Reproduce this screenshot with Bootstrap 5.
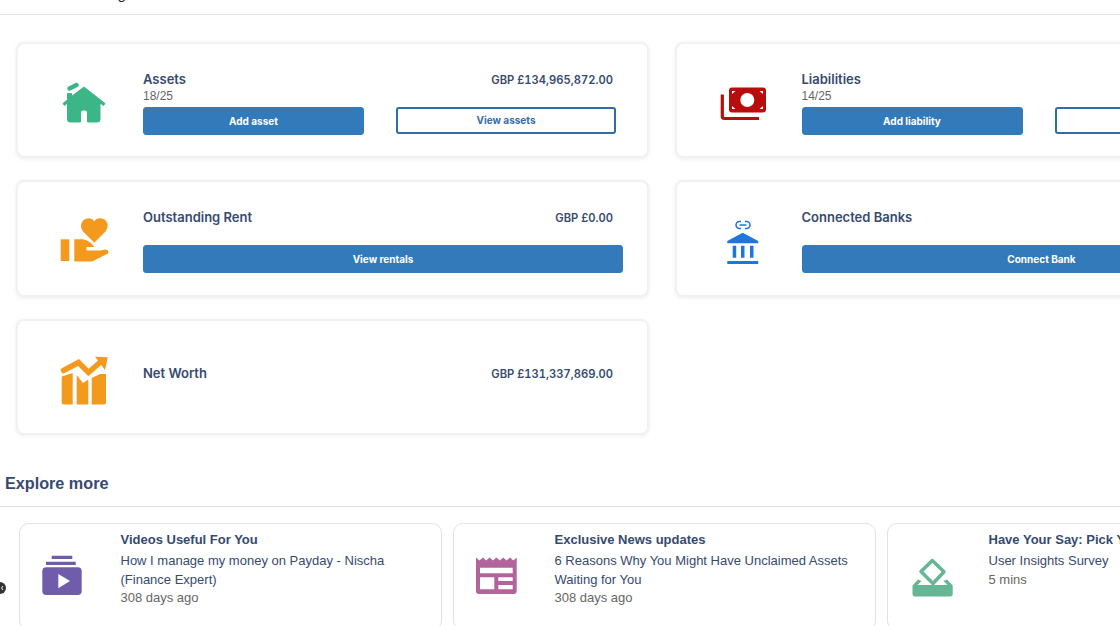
<!DOCTYPE html>
<html lang="en">
<head>
<meta charset="utf-8">
<title>Dashboard</title>
<link rel="stylesheet" href="https://cdn.jsdelivr.net/npm/bootstrap@5.3.0/dist/css/bootstrap.min.css">
<style>
html,body{height:626px;overflow:hidden;background:#fff}
body{font-family:"Liberation Sans",Arial,sans-serif;width:1120px;position:relative}
.top-strip{height:15px;overflow:hidden;border-bottom:1px solid #e3e3e3}
.top-strip span{display:block;margin-top:-15.500px;font-size:15px;line-height:18px;padding-left:5px;color:#222}
.tile-grid{display:grid;grid-template-columns:633px 633px;column-gap:25.500px;row-gap:22px;width:1291px;padding:26.500px 0 0 16px}
.tile{height:116.500px;border:2px solid #f1f1f1;border-radius:8px;box-shadow:0 1px 4px rgba(0,0,0,.07);background:#fff;flex-direction:row;align-items:center}
.tile-ico{width:60px;height:60px;margin-left:36px;flex:none}
.tile-body{margin-left:29px;width:480px;align-self:flex-start;padding-top:26px;font-family:Inter,"Liberation Sans",sans-serif}
.tile-body-mid{padding-top:43px}
.tile-name{font-size:13px;font-weight:600;line-height:18px;color:#364a6f}
.tile-val{font-size:11.200px;font-weight:600;line-height:18px;height:18px;color:#364a6f;padding:1px 10px 0 0;font-variant-numeric:tabular-nums}
.tile-count{font-size:12px;line-height:15px;height:15px;color:#666;font-family:"Liberation Sans",sans-serif;margin:1px 0 3px}
.tile-acts{gap:32px}
.act{font-size:10px;font-weight:700;border-radius:3px;height:28px;line-height:26px;padding:0;width:221px;--bs-btn-bg:#337abb;--bs-btn-border-color:#337abb;--bs-btn-color:#fff}
.act-line{width:220px;height:27px;line-height:23px;border:2px solid #2e6ea8;background:#fff;color:#336fa8;--bs-btn-bg:#fff;--bs-btn-color:#336fa8;--bs-btn-border-color:#2e6ea8}
.act-wide{width:480px}
.act-gap{margin-top:19px}
.explore-h{font-size:16.200px;font-weight:700;line-height:20px;color:#364a6f;margin:0;padding:38px 0 13px 5px;border-bottom:1px solid #e3e3e3}
.explore-row{gap:11.500px;padding:16px 0 0 19px;width:1400px}
.promo{width:422.500px;height:108px;border:1.500px solid #e2e2e2;border-radius:10px;flex-direction:row;align-items:center;background:#fff;flex:none}
.promo-ico{width:60px;height:60px;margin-left:11.500px;flex:none}
.promo-body{margin-left:29px;align-self:flex-start;padding-top:6.500px;font-size:13px;color:#364a6f;line-height:18.500px}
.promo-title{font-weight:700;margin-bottom:3px}
.promo-meta{color:#666}
.pager-dot{position:absolute;left:-6px;top:582px;width:12px;height:12px;border-radius:50%;background:#333;display:flex;align-items:center;justify-content:flex-end;padding-right:2px}
.pager-dot svg{display:block}
</style>
</head>
<body>
<div class="top-strip"><span>Dashboard Listing</span></div>

<div class="tile-grid">
  <div class="card tile">
    <svg class="tile-ico" viewBox="54 70 60 60"><path d="M84 87 105 103.500 103.500 105.500 100 103V119.500Q100 122 97.500 122H87.500V113Q87.500 110 85 110H83Q80.500 110 80.500 113V122H70Q67.500 122 67.500 119.500V103L64.500 105.500 63 103.500 67.500 100V93.500H71.500V96.500Z" fill="#3cb687" stroke="#3cb687" stroke-width="1" stroke-linejoin="round"/><path d="M69.500 88.500 76.500 85" stroke="#3cb687" stroke-width="4.500" stroke-linecap="round" fill="none"/></svg>
    <div class="tile-body">
      <div class="d-flex justify-content-between"><span class="tile-name">Assets</span><span class="tile-val">GBP £134,965,872.00</span></div>
      <div class="tile-count">18/25</div>
      <div class="d-flex tile-acts"><a class="btn act" href="#">Add asset</a><a class="btn act act-line" href="#">View assets</a></div>
    </div>
  </div>
  <div class="card tile">
    <svg class="tile-ico" viewBox="713 70 60 60"><rect x="729" y="87.500" width="37" height="25" rx="3" fill="#b80d0d"/><circle cx="747.300" cy="100" r="7" fill="#fff"/><path d="M732 91h3.500l-3.500 3zM763 91h-3.500l3.500 3zM732 109h3.500l-3.500-3zM763 109h-3.500l3.500-3z" fill="#fff"/><path d="M722.300 94.500V116.500Q722.300 118.500 724.500 118.500H759" stroke="#b80d0d" stroke-width="3.200" fill="none"/></svg>
    <div class="tile-body">
      <div class="d-flex justify-content-between"><span class="tile-name">Liabilities</span><span class="tile-val">GBP £3,628,003.00</span></div>
      <div class="tile-count">14/25</div>
      <div class="d-flex tile-acts"><a class="btn act" href="#">Add liability</a><a class="btn act act-line" href="#">View liabilities</a></div>
    </div>
  </div>
  <div class="card tile">
    <svg class="tile-ico" viewBox="54 208 60 60"><path d="M94.300 242.700 83 231.500Q80.500 228.500 81 225 82 219 88 218.300 92 218 94.300 221.500 96.500 218 100.500 218.300 107 219 107.700 225 108 228.500 105.500 231.500Z" fill="#f39a1e"/><rect x="60.700" y="239.300" width="8.600" height="21.700" fill="#f39a1e"/><path d="M74.300 239.300H82C87 239.500 91.500 243 94.500 247H86.500V250.500H100L105.500 249.500Q109.500 250 108 253.500L92 261.500H74.300Z" fill="#f39a1e"/></svg>
    <div class="tile-body">
      <div class="d-flex justify-content-between"><span class="tile-name">Outstanding Rent</span><span class="tile-val">GBP £0.00</span></div>
      <a class="btn act act-wide act-gap" href="#">View rentals</a>
    </div>
  </div>
  <div class="card tile">
    <svg class="tile-ico" viewBox="713 208 60 60"><path d="M741 221.500h-1.500a3.500 3.500 0 0 0 0 7H741M745 221.500h1.500a3.500 3.500 0 0 1 0 7H745M739.500 225h7" fill="none" stroke="#1f75e0" stroke-width="1.500"/><path d="M742.700 232.700 727.300 241V243.300H758.200V241Z" fill="#1f75e0"/><path d="M732.700 245.700h3.500v12h-3.500zM741 245.700h3.500v12H741zM750 245.700h3.500v12H750zM727.300 261h30.900v3H727.300z" fill="#1f75e0"/></svg>
    <div class="tile-body">
      <div class="d-flex justify-content-between"><span class="tile-name">Connected Banks</span></div>
      <a class="btn act act-wide act-gap" href="#">Connect Bank</a>
    </div>
  </div>
  <div class="card tile">
    <svg class="tile-ico" viewBox="54 347 60 60"><path d="M63.500 370.500 78.500 362.500 88.500 372.500 101 361.500" stroke="#f39a1e" stroke-width="5.500" stroke-linecap="round" fill="none"/><path d="M95 356.700 107.800 357.300 105 370Z" fill="#f39a1e"/><path d="M61.700 376.500 72.700 373V404.500H63.500Q61.700 404.500 61.700 402.500ZM76.700 375 83 383 88.300 379.500V404.500H76.700ZM91.700 378 100 374H106V402.500Q106 404.500 104 404.500H91.700Z" fill="#f39a1e"/></svg>
    <div class="tile-body tile-body-mid">
      <div class="d-flex justify-content-between"><span class="tile-name">Net Worth</span><span class="tile-val">GBP £131,337,869.00</span></div>
    </div>
  </div>
</div>

<h2 class="explore-h">Explore more</h2>
<span class="pager-dot" aria-hidden="true"><svg width="4" height="8" viewBox="0 0 4 8"><path d="M3 2 1.500 4 3 6" fill="none" stroke="#fff" stroke-width="1"/></svg></span>
<div class="d-flex explore-row">
  <div class="card promo">
    <svg class="promo-ico" viewBox="32 547 60 60"><path d="M51.700 555.700h20.600v3.400H51.700zM46 561.700h29.700v3.400H46z" fill="#6f5cab"/><rect x="42.300" y="567.300" width="39.400" height="27.700" rx="4" fill="#6f5cab"/><path d="M58.300 574v14.300L70 581Z" fill="#fff"/></svg>
    <div class="promo-body">
      <div class="promo-title">Videos Useful For You</div>
      <div>How I manage my money on Payday - Nischa<br>(Finance Expert)</div>
      <div class="promo-meta">308 days ago</div>
    </div>
  </div>
  <div class="card promo">
    <svg class="promo-ico" viewBox="466 547 60 60"><path d="M476 557.500l3.400 3 3.400-3 3.400 3 3.400-3 3.400 3 3.400-3 3.400 3 3.400-3 3.400 3 3.400-3 3.400 3 3.300-3V591Q516.700 594 513.700 594H479Q476 594 476 591Z" fill="#b0649b"/><path d="M480 567.700h32.700v5.600H480zM480 577.300h14.300v12H480zM498.300 577.300h14.400v3.700h-14.400zM498.300 585h14.400v4.300h-14.400z" fill="#fff"/></svg>
    <div class="promo-body">
      <div class="promo-title">Exclusive News updates</div>
      <div>6 Reasons Why You Might Have Unclaimed Assets<br>Waiting for You</div>
      <div class="promo-meta">308 days ago</div>
    </div>
  </div>
  <div class="card promo">
    <svg class="promo-ico" viewBox="900 547 60 60"><path d="M932.300 560.500 944 571.700 933 583.500 921 571.500Z" fill="none" stroke="#66b594" stroke-width="3.500" stroke-linejoin="round"/><path d="M918 579.500 912.500 585.500V594Q912.500 596.500 915 596.500H950Q952.700 596.500 952.700 594V585.500L947 579.500 943.500 581 947.500 585H917.500L921.500 581Z" fill="#66b594"/></svg>
    <div class="promo-body">
      <div class="promo-title">Have Your Say: Pick Your Next Topic</div>
      <div>User Insights Survey</div>
      <div class="promo-meta">5 mins</div>
    </div>
  </div>
</div>
<script src="https://cdn.jsdelivr.net/npm/bootstrap@5.3.0/dist/js/bootstrap.bundle.min.js"></script>
</body>
</html>
